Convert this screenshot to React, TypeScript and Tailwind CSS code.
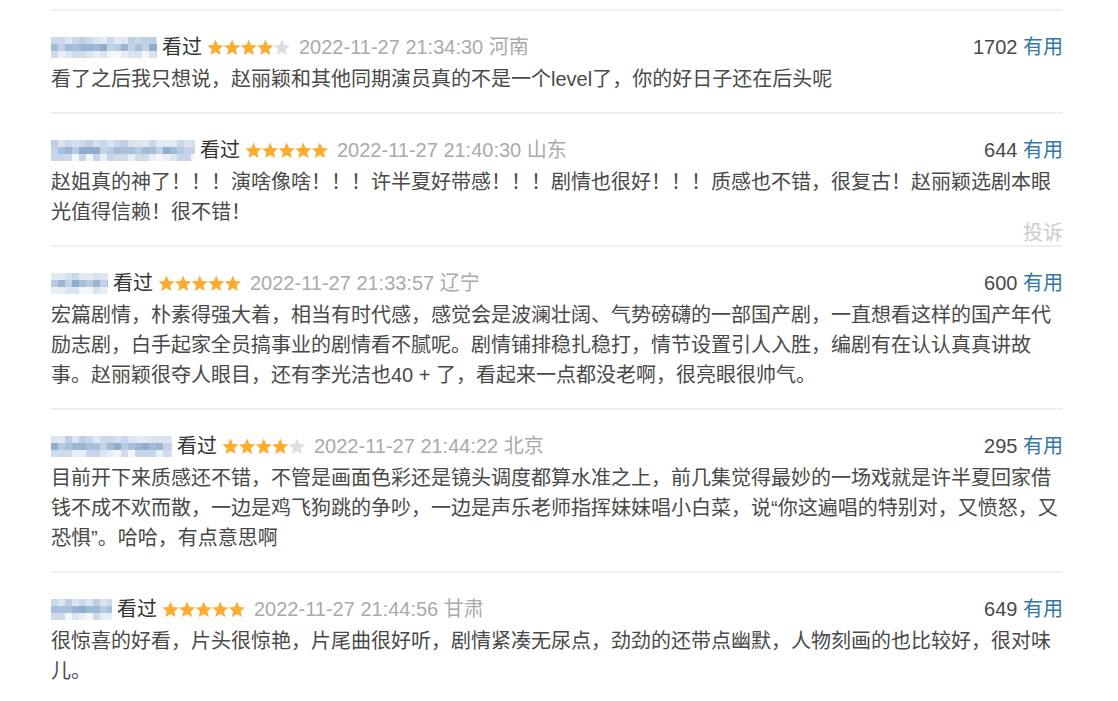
import React from "react";

type Review = {
  nameWidth: number;
  seed: number;
  stars: number;
  time: string;
  place: string;
  votes: number;
  text: string;
  complaint?: boolean;
};

const reviews: Review[] = [
  {
    nameWidth: 106,
    seed: 3,
    stars: 4,
    time: "2022-11-27 21:34:30",
    place: "河南",
    votes: 1702,
    text: "看了之后我只想说，赵丽颖和其他同期演员真的不是一个level了，你的好日子还在后头呢",
  },
  {
    nameWidth: 144,
    seed: 11,
    stars: 5,
    time: "2022-11-27 21:40:30",
    place: "山东",
    votes: 644,
    text: "赵姐真的神了！！！演啥像啥！！！许半夏好带感！！！剧情也很好！！！质感也不错，很复古！赵丽颖选剧本眼光值得信赖！很不错！",
    complaint: true,
  },
  {
    nameWidth: 57,
    seed: 7,
    stars: 5,
    time: "2022-11-27 21:33:57",
    place: "辽宁",
    votes: 600,
    text: "宏篇剧情，朴素得强大着，相当有时代感，感觉会是波澜壮阔、气势磅礴的一部国产剧，一直想看这样的国产年代励志剧，白手起家全员搞事业的剧情看不腻呢。剧情铺排稳扎稳打，情节设置引人入胜，编剧有在认认真真讲故事。赵丽颖很夺人眼目，还有李光洁也40 + 了，看起来一点都没老啊，很亮眼很帅气。",
  },
  {
    nameWidth: 121,
    seed: 19,
    stars: 4,
    time: "2022-11-27 21:44:22",
    place: "北京",
    votes: 295,
    text: "目前开下来质感还不错，不管是画面色彩还是镜头调度都算水准之上，前几集觉得最妙的一场戏就是许半夏回家借钱不成不欢而散，一边是鸡飞狗跳的争吵，一边是声乐老师指挥妹妹唱小白菜，说“你这遍唱的特别对，又愤怒，又恐惧”。哈哈，有点意思啊",
  },
  {
    nameWidth: 61,
    seed: 29,
    stars: 5,
    time: "2022-11-27 21:44:56",
    place: "甘肃",
    votes: 649,
    text: "很惊喜的好看，片头很惊艳，片尾曲很好听，剧情紧凑无尿点，劲劲的还带点幽默，人物刻画的也比较好，很对味儿。",
  },
];

const topShades = ["#d6e1ee", "#c9d8ea", "#e2e9f2", "#bccfe4", "#dbe4ef"];
const midShades = ["#a9c0da", "#9bb5d3", "#b6cae1", "#8fadcf", "#c3d3e6", "#a2bbd7"];
const lowShades = ["#dbe4ef", "#cfdbe9", "#e8eef5", "#c6d5e7", "#f3f6fa"];

// pixelated user name
const BlurName = ({ width, seed }: { width: number; seed: number }) => {
  const cols = Math.ceil(width / 7);
  let s = seed;
  const next = () => {
    s = (s * 9301 + 49297) % 233280;
    return s / 233280;
  };
  const rows = [topShades, midShades, lowShades];
  return (
    <div className="flex flex-col mr-[5px] overflow-hidden" style={{ width }}>
      {rows.map((pal, r) => (
        <div key={r} className="flex h-[7px]">
          {Array.from({ length: cols }).map((_, c) => {
            const color = pal[Math.floor(next() * pal.length)];
            return <div key={c} className="w-[7px] h-[7px] shrink-0" style={{ background: color }} />;
          })}
        </div>
      ))}
    </div>
  );
};

const starPath =
  "M8.5 0.6 L10.79 5.94 L16.58 6.47 L12.21 10.31 L13.5 15.98 L8.5 13 L3.5 15.98 L4.79 10.31 L0.42 6.47 L6.21 5.94 Z";

const Stars = ({ count }: { count: number }) => (
  <svg width="84" height="17" viewBox="0 0 84 17" className="mx-[5px] shrink-0">
    {[0, 1, 2, 3, 4].map((i) => (
      <path
        key={i}
        d={starPath}
        transform={`translate(${i * 16.6} 0)`}
        fill={i < count ? "#ffac2d" : "#dedede"}
      />
    ))}
  </svg>
);

const Item = ({ r }: { r: Review }) => (
  <div className="relative border-t-2 border-[#efefef] pt-[21px] pb-[18px]">
    <div className="flex items-center justify-between h-[30px] leading-[30px]">
      <div className="flex items-center">
        <BlurName width={r.nameWidth} seed={r.seed} />
        <span className="text-[#333]">看过</span>
        <Stars count={r.stars} />
        <span className="text-[#aaa] ml-[3px]">
          {r.time} {r.place}
        </span>
      </div>
      <div>
        <span className="text-[#494949]">{r.votes}</span>{" "}
        <span className="text-[#3377aa]">有用</span>
      </div>
    </div>
    <p className="mt-[2px] leading-[30px] text-[#494949]">{r.text}</p>
    {r.complaint && (
      <span className="absolute right-0 bottom-[2px] leading-[20px] text-[#cccccc]">投诉</span>
    )}
  </div>
);

export default function App() {
  return (
    <div
      className="w-[1118px] h-[701px] bg-white overflow-hidden pt-[9px] text-[20px]"
      style={{ fontFamily: '"Liberation Sans", "Noto Sans CJK SC", sans-serif' }}
    >
      <div className="ml-[51px] w-[1012px]">
        {reviews.map((r, i) => (
          <Item key={i} r={r} />
        ))}
      </div>
    </div>
  );
}
